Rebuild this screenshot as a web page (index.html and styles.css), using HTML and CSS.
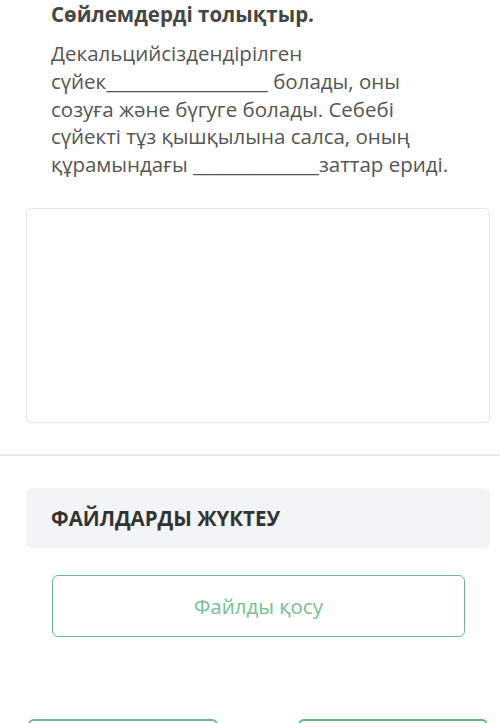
FILE: index.html
```html
<!DOCTYPE html>
<html lang="kk">
<head>
<meta charset="utf-8">
<link rel="stylesheet" href="styles.css">
</head>
<body>
<section class="question">
  <h2 class="title">Сөйлемдерді толықтыр.</h2>
  <p class="text">Декальцийсіздендірілген<br>сүйек__________________ болады, оны<br>созуға және бүгуге болады. Себебі<br>сүйекті тұз қышқылына салса, оның<br>құрамындағы ______________заттар ериді.</p>
  <textarea class="answer"></textarea>
</section>
<hr class="divider">
<section class="files">
  <div class="files-head">ФАЙЛДАРДЫ ЖҮКТЕУ</div>
  <button class="add-file">Файлды қосу</button>
  <div class="actions">
    <button class="act act-left"></button>
    <button class="act act-right"></button>
  </div>
</section>
</body>
</html>
```
FILE: styles.css
```css
html, body {
  margin: 0;
  padding: 0;
  background: #ffffff;
  font-family: "Open Sans", "Noto Sans", sans-serif;
  overflow: hidden;
}
.question {
  padding: 0 10px 0 26px;
}
.title {
  margin: 0;
  padding-left: 25px;
  font-size: 20.5px;
  line-height: 28px;
  font-weight: 700;
  color: #454545;
}
.text {
  margin: 12px 0 0;
  padding-left: 25px;
  font-size: 20.5px;
  line-height: 27.8px;
  color: #555555;
  white-space: nowrap;
}
.answer {
  display: block;
  box-sizing: border-box;
  width: 100%;
  height: 215px;
  margin-top: 29px;
  border: 1.5px solid #e6e6e6;
  border-radius: 5px;
  background: #ffffff;
  resize: none;
}
.divider {
  margin: 31px 0 0;
  border: 0;
  height: 2px;
  background: #e8e8e8;
}
.files {
  padding: 32px 10px 0 26px;
}
.files-head {
  box-sizing: border-box;
  height: 60px;
  padding-left: 25px;
  display: flex;
  align-items: center;
  background: #f3f4f7;
  border-radius: 6px;
  font-size: 20.5px;
  font-weight: 700;
  color: #333333;
}
.add-file {
  display: block;
  box-sizing: border-box;
  width: 413px;
  height: 62px;
  margin: 27px 0 0 26px;
  border: 1.5px solid #6cb98a;
  border-radius: 6px;
  background: #ffffff;
  font-family: inherit;
  font-size: 20.5px;
  color: #74c092;
}
.actions {
  display: flex;
  justify-content: space-between;
  margin-top: 82px;
  padding: 0 2px;
}
.act {
  width: 190px;
  height: 50px;
  border: 2px solid #6fb3a0;
  border-radius: 6px;
  background: #ffffff;
}
.act-right {
  border-color: #62b872;
}
```
